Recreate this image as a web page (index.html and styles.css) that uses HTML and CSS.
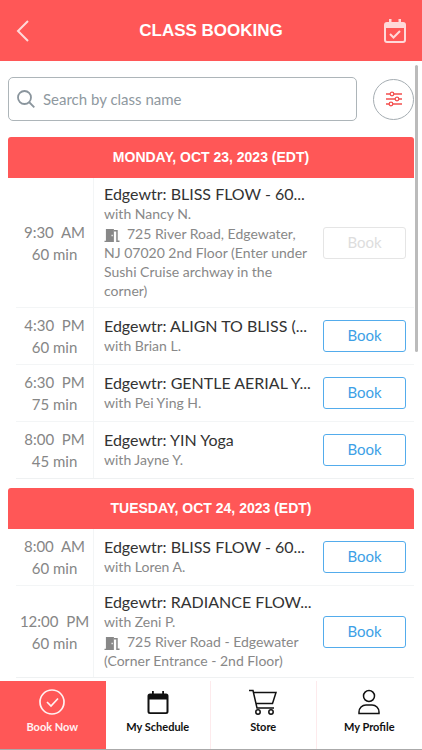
FILE: index.html
```html
<!DOCTYPE html>
<html lang="en">
<head>
<meta charset="utf-8">
<meta name="viewport" content="width=device-width, initial-scale=1">
<title>Class Booking</title>
<link rel="stylesheet" href="styles.css">
</head>
<body>
<svg class="defs" aria-hidden="true">
  <symbol id="door" viewBox="0 0 16 16">
    <path fill="currentColor" fill-rule="evenodd" d="M1.500 1H10V15H0V13.500H1.500ZM7.500 7.200v1.700h1.300V7.200Z"/>
    <path fill="none" stroke="currentColor" stroke-width="1.600" d="M10 2.800h3.300v11.400H16"/>
  </symbol>
</svg>
<header class="topbar">
  <button class="icon-button" aria-label="Back">
    <svg width="14" height="22" viewBox="0 0 14 22" fill="none" stroke="currentColor" stroke-width="2"><path d="M12 1 2 11l10 10"/></svg>
  </button>
  <h1>CLASS BOOKING</h1>
  <button class="icon-button" aria-label="My bookings">
    <svg width="22" height="26" viewBox="0 0 22 26"><path fill="currentColor" fill-rule="evenodd" d="M5 1h2.500v3h7V1H17v3h2a3 3 0 0 1 3 3v15a3 3 0 0 1-3 3H3a3 3 0 0 1-3-3V7a3 3 0 0 1 3-3h2ZM2 10v12q0 1 1 1h16q1 0 1-1V10Z"/><path fill="none" stroke="currentColor" stroke-width="2" d="m6 16 3.500 3.500L16 13"/></svg>
  </button>
</header>
<main class="content">
  <div class="scroll-thumb"></div>
  <form class="search">
    <label class="search-box">
      <svg width="18" height="18" viewBox="0 0 18 18" fill="none" stroke="currentColor" stroke-width="1.800"><circle cx="7.500" cy="7.500" r="6.500"/><path d="m12 12 5.300 5.300"/></svg>
      <input type="text" placeholder="Search by class name" aria-label="Search by class name">
    </label>
    <button class="filter" type="button" aria-label="Filters">
      <svg width="16" height="16" viewBox="0 0 16 16" fill="none" stroke="currentColor" stroke-width="1.300"><path d="M0 3h4m4 0h8M0 8h9m4 0h3M0 13h3m4 0h9"/><circle cx="6" cy="3" r="1.800"/><circle cx="11" cy="8" r="1.800"/><circle cx="5" cy="13" r="1.800"/></svg>
    </button>
  </form>

  <section class="day">
    <h2>MONDAY, OCT 23, 2023 (EDT)</h2>
    <ul>
      <li>
        <div class="time">9:30&nbsp; AM<br>60 min</div>
        <div class="info"><h3>Edgewtr: BLISS FLOW - 60...</h3><p class="teacher">with Nancy N.</p><p class="place"><svg class="door"><use href="#door"/></svg>725 River Road, Edgewater, NJ 07020 2nd Floor (Enter under Sushi Cruise archway in the corner)</p></div>
        <button class="book" disabled>Book</button>
      </li>
      <li>
        <div class="time">4:30&nbsp; PM<br>60 min</div>
        <div class="info"><h3>Edgewtr: ALIGN TO BLISS (...</h3><p class="teacher">with Brian L.</p></div>
        <button class="book">Book</button>
      </li>
      <li>
        <div class="time">6:30&nbsp; PM<br>75 min</div>
        <div class="info"><h3>Edgewtr: GENTLE AERIAL Y...</h3><p class="teacher">with Pei Ying H.</p></div>
        <button class="book">Book</button>
      </li>
      <li>
        <div class="time">8:00&nbsp; PM<br>45 min</div>
        <div class="info"><h3>Edgewtr: YIN Yoga</h3><p class="teacher">with Jayne Y.</p></div>
        <button class="book">Book</button>
      </li>
    </ul>
  </section>

  <section class="day">
    <h2>TUESDAY, OCT 24, 2023 (EDT)</h2>
    <ul>
      <li>
        <div class="time">8:00&nbsp; AM<br>60 min</div>
        <div class="info"><h3>Edgewtr: BLISS FLOW - 60...</h3><p class="teacher">with Loren A.</p></div>
        <button class="book">Book</button>
      </li>
      <li>
        <div class="time">12:00&nbsp; PM<br>60 min</div>
        <div class="info"><h3>Edgewtr: RADIANCE FLOW...</h3><p class="teacher">with Zeni P.</p><p class="place"><svg class="door"><use href="#door"/></svg>725 River Road - Edgewater (Corner Entrance - 2nd Floor)</p></div>
        <button class="book">Book</button>
      </li>
    </ul>
  </section>
</main>
<nav class="tabs">
  <a href="#book" class="active">
    <svg viewBox="0 0 28 28" fill="none" stroke="currentColor" stroke-width="1.700"><circle cx="14" cy="14" r="12"/><path d="m9 14 4 4 7-7.500"/></svg>
    Book Now
  </a>
  <a href="#schedule">
    <svg viewBox="0 0 28 28"><path fill="currentColor" fill-rule="evenodd" d="M8 3h1.800v2.500h8.400V3H20v2.500h2a2.500 2.500 0 0 1 2.500 2.500v15.500A2.500 2.500 0 0 1 22 26H6a2.500 2.500 0 0 1-2.500-2.500V8A2.500 2.500 0 0 1 6 5.500h2ZM5.500 11.500v12q0 .7.700.7h15.600q.7 0 .7-.7v-12Z"/></svg>
    My Schedule
  </a>
  <a href="#store">
    <svg viewBox="0 0 28 28" fill="none" stroke="currentColor" stroke-width="1.500"><path d="M0 2.500h4l4 17.500h17M4.700 4.500H27L23.500 15.500H7.200"/><circle cx="9" cy="24" r="2.200"/><circle cx="22" cy="24" r="2.200"/></svg>
    Store
  </a>
  <a href="#profile">
    <svg viewBox="0 0 28 28" fill="none" stroke="currentColor" stroke-width="1.500"><circle cx="14" cy="8" r="5.500"/><path d="M4 25.500v-1.500a7 7 0 0 1 7-7h6a7 7 0 0 1 7 7v1.500Z"/></svg>
    My Profile
  </a>
</nav>
</body>
</html>
```
FILE: styles.css
```css
* { box-sizing: border-box; }
body, h1, h2, h3, p, ul { margin: 0; padding: 0; }
body {
  display: flex;
  flex-direction: column;
  height: 100vh;
  background: #fff;
  color: #333;
  font-family: Lato, sans-serif;
}
button, input { font: inherit; }
button { padding: 0; background: none; }
svg { flex: none; }
.defs { display: none; }

.topbar {
  display: flex;
  align-items: center;
  justify-content: space-between;
  flex: none;
  height: 61px;
  padding: 0 16px;
  background: #ff5757;
  color: #fff;
}
.topbar h1 { font: bold 17px "Liberation Sans", sans-serif; }
.icon-button {
  display: flex;
  width: 22px;
  border: 0;
  color: #ffd9d9;
}

.content {
  position: relative;
  flex: 1;
  min-height: 0;
  overflow: hidden;
  padding: 16px 8px 0;
}
.scroll-thumb {
  position: absolute;
  top: 4px;
  right: 4px;
  width: 3px;
  height: 287px;
  border-radius: 2px;
  background: #bbb;
}

.search {
  display: flex;
  align-items: center;
  gap: 16px;
  margin-bottom: 16px;
}
.search-box {
  display: flex;
  flex: 1;
  align-items: center;
  gap: 8px;
  height: 44px;
  padding: 0 8px;
  border: 1px solid #adb5b9;
  border-radius: 5px;
  color: #8a959d;
}
.search-box input {
  flex: 1;
  min-width: 0;
  padding: 0;
  border: 0;
  outline: 0;
  background: none;
  font-size: 15px;
}
.search-box input::placeholder { color: #8f999f; opacity: 1; }
.filter {
  display: flex;
  align-items: center;
  justify-content: center;
  width: 41px;
  height: 41px;
  border: 1px solid #a5adb2;
  border-radius: 50%;
  color: #f4504f;
}

.day { margin-bottom: 9px; }
.day h2 {
  border-radius: 3px 3px 0 0;
  background: #ff5757;
  color: #fff;
  font: bold 14px/41px "Liberation Sans", sans-serif;
  text-align: center;
}
.day ul { padding-left: 8px; list-style: none; }
.day li {
  display: grid;
  grid-template-columns: 78px 1fr 83px;
  align-items: center;
  min-height: 57px;
  padding-right: 8px;
  border-bottom: 1px solid #f3f5f6;
}
.day li:last-child { border-bottom-color: #eff1f2; }
.time {
  align-self: stretch;
  align-content: center;
  border-right: 1px solid #f3f5f6;
  color: #868686;
  font-size: 15px;
  line-height: 22px;
  text-align: center;
}
.info { min-width: 0; padding: 6px 8px 7px 10px; }
.info h3 {
  font-size: 16px;
  font-weight: 400;
  line-height: 20px;
  white-space: nowrap;
}
.info p { color: #888; font-size: 14px; }
.info .teacher { line-height: 20px; }
.info .place { line-height: 19px; }
.door {
  width: 16px;
  height: 15px;
  margin-right: 7px;
  vertical-align: middle;
}
.book {
  height: 32px;
  padding-bottom: 2px;
  border: 1px solid #53acec;
  border-radius: 3px;
  color: #3d9fe6;
  font-size: 15px;
}
.book:disabled { border-color: #e5e5e5; color: #ddd; }

.tabs {
  display: grid;
  grid-template-columns: repeat(4, 1fr);
  flex: none;
  height: 69px;
  border-bottom: 1px solid #aaa;
  background: #fff;
}
.tabs a {
  display: flex;
  flex-direction: column;
  align-items: center;
  gap: 3px;
  padding-top: 7px;
  border-right: 1px solid #fdeaec;
  color: #111;
  font: bold 11px/16px Lato, sans-serif;
  text-decoration: none;
}
.tabs a:last-child { border-right: 0; }
.tabs svg { width: 28px; height: 28px; }
.tabs .active { border-color: #ff5757; background: #ff5757; color: #fff1f1; }
```
